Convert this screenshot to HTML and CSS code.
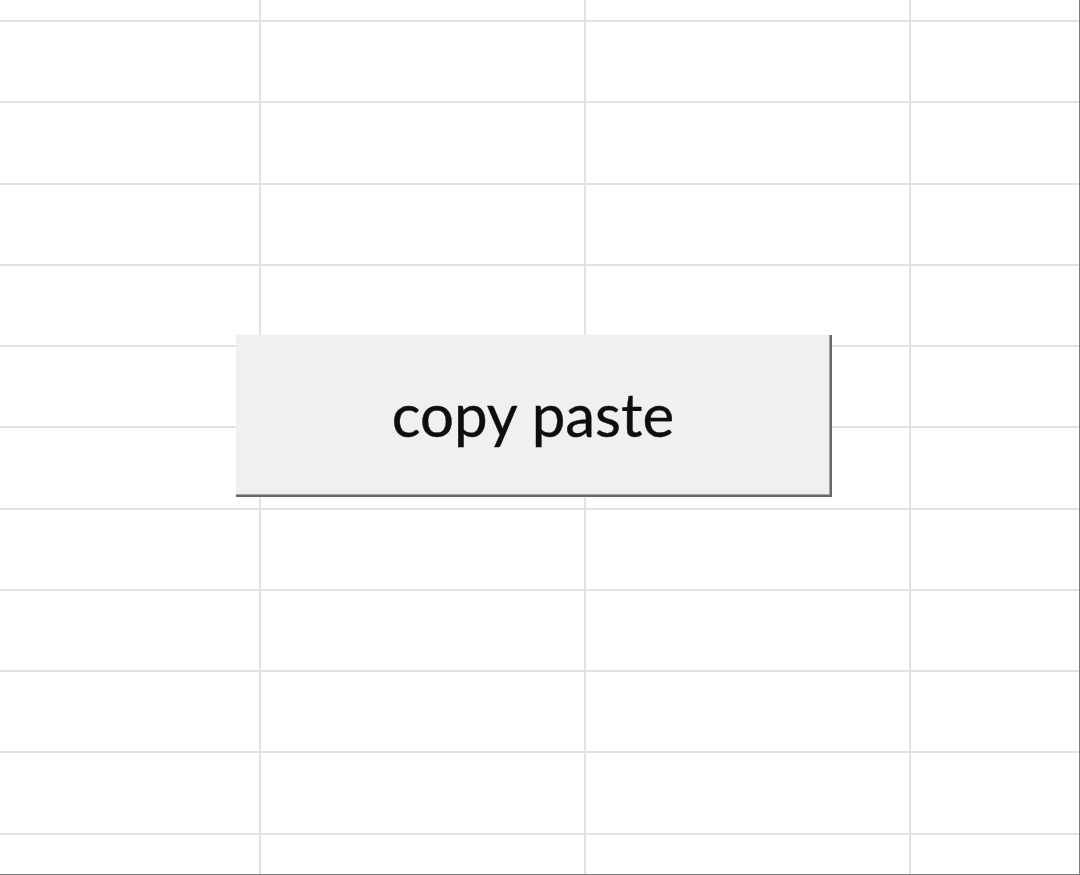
FILE: index.html
```html
<!DOCTYPE html>
<html lang="en">
<head>
  <meta charset="UTF-8">
  <title>Sheet1</title>
  <meta name="viewport" content="width=device-width, initial-scale=1.0">
  <link rel="stylesheet" href="styles.css">
</head>
<body>
  <main class="sheet">
    <div class="cells">
      <div></div><div></div><div></div><div></div><div></div>
      <div></div><div></div><div></div><div></div><div></div>
      <div></div><div></div><div></div><div></div><div></div>
      <div></div><div></div><div></div><div></div><div></div>
      <div></div><div></div><div></div><div></div><div></div>
      <div></div><div></div><div></div><div></div><div></div>
      <div></div><div></div><div></div><div></div><div></div>
      <div></div><div></div><div></div><div></div><div></div>
      <div></div><div></div><div></div><div></div><div></div>
      <div></div><div></div><div></div><div></div><div></div>
      <div></div><div></div><div></div><div></div><div></div>
      <div></div><div></div><div></div><div></div><div></div>
    </div>
    <!-- form control sitting over the cells -->
    <button class="macro-btn" type="button">copy paste</button>
  </main>
</body>
</html>
```

FILE: styles.css
```css
:root{
  --grid:#e2e2e2;
  --cell:#ffffff;
  --frame:#7c7c7c;
  --btn:#f0f0f0;
  --btn-edge:#686868;
}
*{box-sizing:border-box;}
html, body{margin:0; padding:0; background:var(--cell);}
.sheet{
  position:relative;
  width:1080px; height:875px;
  border-right:1px solid var(--frame);
  border-bottom:1px solid var(--frame);
  overflow:hidden;
}
.cells{
  display:grid;
  height:100%;
  grid-template-columns:259px 323px 323px 323px 1fr;
  grid-template-rows:20px repeat(10, 79.25px) 1fr;
  gap:2px;
  background:var(--grid);
}
.cells div{background:var(--cell);}
.macro-btn{
  position:absolute;
  left:236px; top:335px;
  width:596px; height:162px;
  display:flex; align-items:center; justify-content:center;
  padding:0 0 2px;
  margin:0;
  border:none;
  border-right:2px solid var(--btn-edge);
  border-bottom:2px solid var(--btn-edge);
  box-shadow:inset -1px -1px 0 #a8a8a8;
  background:var(--btn);
  font-family:Lato,"Open Sans",sans-serif;
  font-size:60px;
  color:#0e0e0e;
  -webkit-text-stroke:0.4px #0e0e0e;
  cursor:pointer;
}
```
